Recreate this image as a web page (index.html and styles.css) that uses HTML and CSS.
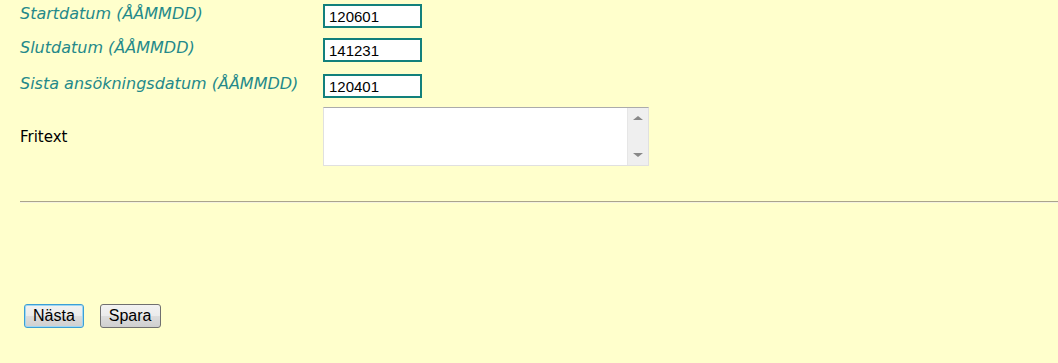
FILE: index.html
```html
<!DOCTYPE html>
<html lang="sv">
<head>
    <meta charset="UTF-8">
    <title>Ansökan</title>
    <link rel="stylesheet" href="styles.css">
</head>
<body>
    <div class="page">
        <div class="form">
            <label class="label date-label" for="start">Startdatum (ÅÅMMDD)</label>
            <input class="date-input" id="start" type="text" value="120601">

            <label class="label date-label" for="slut">Slutdatum (ÅÅMMDD)</label>
            <input class="date-input" id="slut" type="text" value="141231">

            <label class="label date-label" for="sista">Sista ansökningsdatum (ÅÅMMDD)</label>
            <input class="date-input" id="sista" type="text" value="120401">

            <label class="label free-label" for="fritext">Fritext</label>
            <div class="textbox">
                <textarea id="fritext"></textarea>
                <div class="scrollbar">
                    <span class="arrow up"></span>
                    <span class="arrow down"></span>
                </div>
            </div>
        </div>

        <hr class="divider">

        <div class="buttons">
            <button class="btn default" type="button">Nästa</button>
            <button class="btn" type="button">Spara</button>
        </div>
    </div>
</body>
</html>
```

FILE: styles.css
```css
body {
    margin: 0;
    background-color: #ffffcc;
    font-family: "DejaVu Sans", Verdana, sans-serif;
}
.page {
    padding: 4px 0 0 20px;
}
.form {
    display: grid;
    grid-template-columns: 303px 326px;
    grid-template-rows: 34px 36px 33px 59px;
    align-items: start;
}
.label {
    font-size: 16px;
}
.date-label {
    color: #24898a;
    font-style: italic;
}
.free-label {
    color: #000;
    align-self: center;
    font-size: 15px;
}
.date-input {
    box-sizing: border-box;
    width: 99px;
    height: 24px;
    margin: 0;
    padding: 1px 4px 0;
    border: 2px solid #12807c;
    background: #fff;
    font-family: "Liberation Sans", Arial, sans-serif;
    font-size: 15px;
    color: #000;
    outline: none;
}
.textbox {
    display: flex;
    box-sizing: border-box;
    width: 326px;
    height: 59px;
    border: 1px solid #e0e0e0;
    border-top-color: #ababab;
    background: #fff;
}
.textbox textarea {
    flex-grow: 1;
    border: none;
    outline: none;
    resize: none;
    margin: 0;
    padding: 2px;
    font-family: "Liberation Sans", Arial, sans-serif;
    font-size: 15px;
}
.scrollbar {
    width: 20px;
    background-color: #efefef;
    border-left: 1px solid #e6e6e6;
    display: flex;
    flex-direction: column;
    justify-content: space-between;
    align-items: center;
    padding: 8px 0 8px;
}
.arrow {
    width: 0;
    height: 0;
    border-left: 5px solid transparent;
    border-right: 5px solid transparent;
}
.arrow.up {
    border-bottom: 4px solid #888;
}
.arrow.down {
    border-top: 4px solid #888;
}
.divider {
    margin: 35px 0 0 0;
    height: 0;
    border: none;
    border-top: 1px solid #aaa48c;
    border-bottom: 1px solid #f4f2e0;
}
.buttons {
    display: flex;
    gap: 16px;
    padding: 101px 0 0 4px;
}
.btn {
    height: 24px;
    padding: 0 8px;
    border: 1px solid #707070;
    border-radius: 3px;
    background: linear-gradient(#f2f2f2 0%, #ebebeb 50%, #dddddd 51%, #cfcfcf 100%);
    font-family: "Liberation Sans", Arial, sans-serif;
    font-size: 16px;
    color: #000;
}
.btn.default {
    border-color: #3c9fd6;
    box-shadow: inset 0 0 0 1px #9fd6f2;
}
```
